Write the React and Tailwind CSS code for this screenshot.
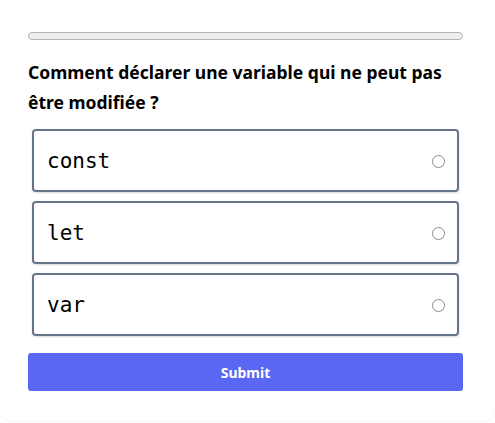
export default function App() {
  const options = ["const", "let", "var"];
  return (
    <div className="w-[495px] h-[423px] bg-white">
      <div className="h-[421px] rounded-b-xl bg-white shadow-[0_1px_2px_rgba(0,0,0,0.05)] px-[28px] pt-[32px]">
        <div className="h-[8px] w-[435px] rounded-full border border-[#b3b3b3] bg-[#efefef]" />
        <h2 className="mt-[17px] text-[17.5px] leading-[30px] font-bold text-black" style={{ fontFamily: '"Noto Sans", sans-serif' }}>
          Comment déclarer une variable qui ne peut pas être modifiée ?
        </h2>
        <div className="mt-[12px] ml-[4px] w-[427px] flex flex-col gap-[9px]">
          {options.map((o) => (
            <label key={o} className="h-[63px] flex items-center justify-between rounded-[4px] border-2 border-[#64748b] bg-white pl-[13px] pr-[12px] pt-[2px] shadow-[0_1px_2px_rgba(0,0,0,0.15)]">
              <span className="text-[21px] text-black" style={{ fontFamily: '"DejaVu Sans Mono", monospace' }}>{o}</span>
              <span className="w-[13px] h-[13px] rounded-full border border-[#8a8a8a] bg-white" />
            </label>
          ))}
        </div>
        <button className="mt-[17px] w-[435px] h-[38px] rounded-[3px] bg-[#5a67f2] text-white text-[14px] font-bold" style={{ fontFamily: '"Noto Sans", sans-serif' }}>
          Submit
        </button>
      </div>
    </div>
  );
}
